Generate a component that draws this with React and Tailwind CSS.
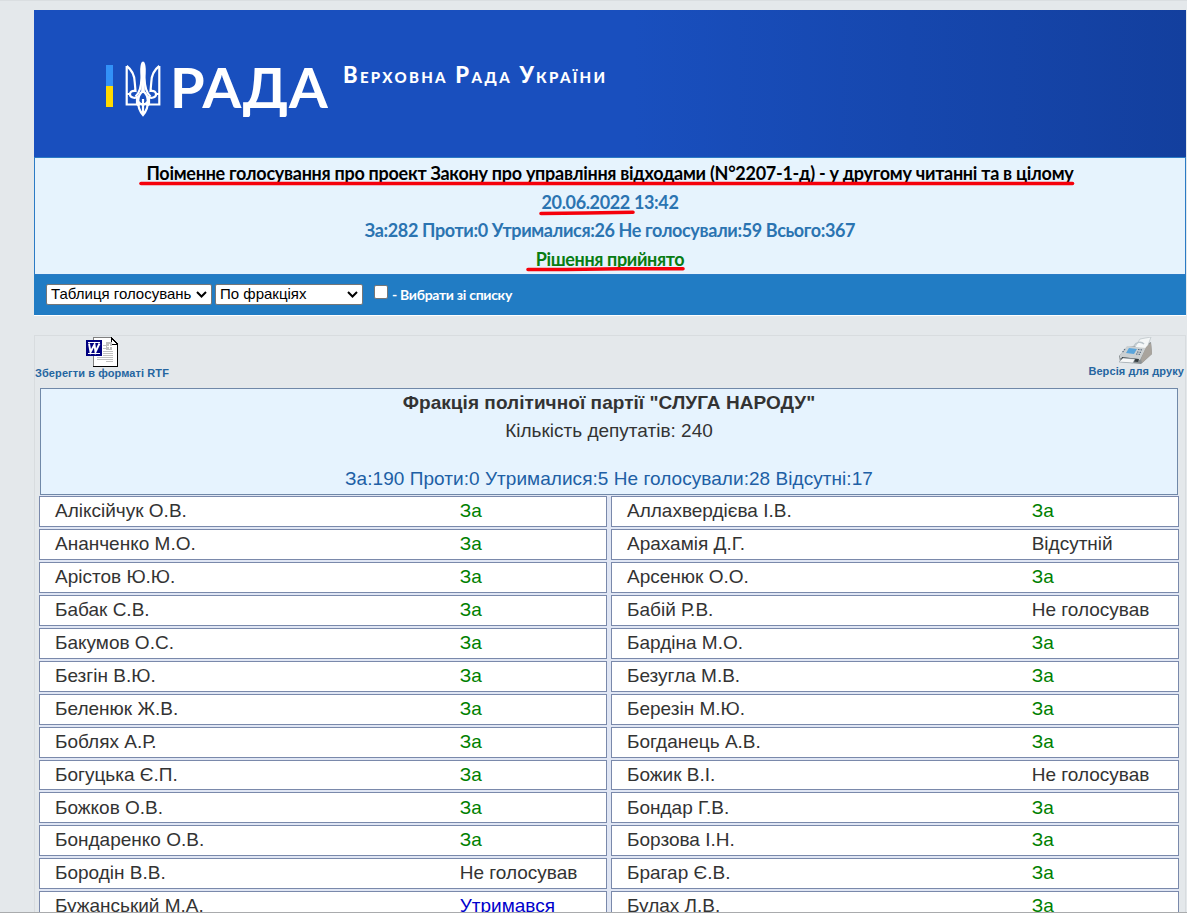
import React from 'react';

const votes = [
    ['Аліксійчук О.В.', 'За', 'Аллахвердієва І.В.', 'За'],
    ['Ананченко М.О.', 'За', 'Арахамія Д.Г.', 'Відсутній'],
    ['Арістов Ю.Ю.', 'За', 'Арсенюк О.О.', 'За'],
    ['Бабак С.В.', 'За', 'Бабій Р.В.', 'Не голосував'],
    ['Бакумов О.С.', 'За', 'Бардіна М.О.', 'За'],
    ['Безгін В.Ю.', 'За', 'Безугла М.В.', 'За'],
    ['Беленюк Ж.В.', 'За', 'Березін М.Ю.', 'За'],
    ['Боблях А.Р.', 'За', 'Богданець А.В.', 'За'],
    ['Богуцька Є.П.', 'За', 'Божик В.І.', 'Не голосував'],
    ['Божков О.В.', 'За', 'Бондар Г.В.', 'За'],
    ['Бондаренко О.В.', 'За', 'Борзова І.Н.', 'За'],
    ['Бородін В.В.', 'Не голосував', 'Брагар Є.В.', 'За'],
    ['Бужанський М.А.', 'Утримався', 'Булах Л.В.', 'За'],
];

const statusColors = {
    'За': 'text-[#008000]',
    'Утримався': 'text-[#0000cc]',
};

const Trident = () => (
    <svg className="ml-[12px] h-[56px] w-[36px]" viewBox="0 0 36 56" fill="none" stroke="#fff" strokeWidth="2.2">
        <path d="M1.700 5v38.500h12.600M34.300 5v38.500H21.700" />
        <path d="M1.700 5C7 9 9.500 15 9.700 21L10.500 30c-4-.5-5.500 1-5.500 3.500 0 3 5 4.500 8 2M34.300 5C29 9 26.500 15 26.300 21L25.500 30c4-.5 5.500 1 5.500 3.500 0 3-5 4.500-8 2" />
        <path d="M2 33h4M34 33h-4M12 35.500v8M24 35.500v8" />
        <path d="M18 1c-3 5-1.300 10-1.500 16-.2 8-2 15-6 18.500M18 1c3 5 1.300 10 1.500 16 .2 8 2 15 6 18.500" />
        <path d="M18 3v27" strokeWidth="3.600" />
        <path d="M18 30c-6 4-7 16 0 24 7-8 6-20 0-24zM12.500 38c1 4 3 5.500 5.500 6 2.500-.5 4.500-2 5.500-6M12.500 45c2-3 9-3 11 0M18 38v16" />
    </svg>
);

const WordIcon = () => (
    <svg className="ml-[51px] block h-[30px] w-[33px]" viewBox="0 0 33 30" shapeRendering="crispEdges">
        <path d="M7 0h18l7 7v23H7z" fill="#fff" />
        <path d="M7.500 30V.5h18" fill="none" stroke="#808080" />
        <path d="M25 .5v7h6.500V29.500H7M25 .5l7 7" fill="none" stroke="#000" />
        <path d="M17 8.500h3M17 11.500h3M11 20.500h16M11 22.500h16M17 14.500h10M17 16.500h10M17 18.500h10M20 24.500h7" stroke="#c0c0c0" />
        <path d="M20 5h6v8h-6z" fill="#c0c0c0" />
        <path d="M21 9.500h5M23.500 7v5" stroke="#fff" />
        <path d="M0 3h16v16H0z" fill="#000080" />
        <path d="M2 5.500h12M2 16.500h12" fill="none" stroke="#fff" />
        <path d="M3 6.500l1.500 8.500 4-7.500 1 7.500 4-8.500" fill="none" stroke="#fff" strokeWidth="1.900" shapeRendering="auto" />
    </svg>
);

const PrinterIcon = () => (
    <svg className="mr-[32px] block h-[29px] w-[35px]" viewBox="0 0 35 29">
        <path d="M1 19l8-9 17-2 7-3 1 12-11 10-21-2z" fill="#8a9093" />
        <path d="M17 10l5-8 11-2-4 11-8 3z" fill="#f4f7f8" stroke="#bac1c5" strokeWidth=".7" />
        <path d="M2 18l7-9 19 2-6 12-20-2z" fill="#cbd0d2" />
        <path d="M28 10l5-4 1 11-10 9-1-4z" fill="#a9a49d" />
        <path d="M11 11l8 1-3 5-8-1z" fill="#59a5dc" />
        <path d="M20 12.500l5 .5M19 15l5 .5M18 17l5 .5M7 12l-3 4" stroke="#596d82" strokeWidth="1.200" strokeDasharray="1.500 1" />
        <path d="M4 20l17 2-1 3-17-2z" fill="#343c3f" />
        <path d="M5 21l12 1-2 4-14-1z" fill="#f7f8f8" stroke="#8b979f" strokeWidth=".5" />
        <path d="M16 9c2-4 7-5 10-2" fill="none" stroke="#b9c4ca" strokeWidth="1.500" />
    </svg>
);

const Select = ({ label, className }) => (
    <div className={`flex h-[21px] items-center justify-between rounded-[2px] border border-[#767676] bg-white pl-[4px] pr-[4px] text-[15px] text-black ${className}`}>
        <span className="whitespace-nowrap">{label}</span>
        <svg className="h-[7px] w-[11px]" viewBox="0 0 11 7" fill="none" stroke="#000" strokeWidth="2">
            <path d="M1 1l4.500 4.500L10 1" />
        </svg>
    </div>
);

const VoteCell = ({ name, status }) => (
    <div className="flex h-[30.940px] w-[568px] items-center border border-[#7a89ab] bg-white pb-[0.300px] pl-[15px] text-[19px] text-[#333]">
        <span className="w-[404.700px] shrink-0">{name}</span>
        <span className={statusColors[status] || 'text-[#333]'}>{status}</span>
    </div>
);

const App = () => {
    return (
        <div className="h-[913px] w-[1187px] overflow-hidden border-b border-b-[#a9abad] border-t border-t-[#dadee1] bg-[#e4e8eb] pl-[34px] pt-[9px] font-['Liberation_Sans',Arial,sans-serif]">
            <div className="w-[1152px]">
                <header className="flex h-[147px] items-start bg-[linear-gradient(90deg,#194fbe_0%,#194fbe_52%,#133f9e_100%)] pl-[72px] text-white font-[Lato,sans-serif]">
                    <div className="mt-[55px] h-[42px] w-[7px] bg-[linear-gradient(#3291f8_50%,#ffda00_50%)]" />
                    <div className="mt-[51px]">
                        <Trident />
                    </div>
                    <div className="ml-[9px] mt-[45px] w-[159px] whitespace-nowrap text-[56px] font-bold leading-[64px] tracking-[0.600px]">РАДА</div>
                    <div className="ml-[14px] mt-[50px] whitespace-nowrap text-[22px] font-black leading-[30px] tracking-[2.300px] [font-variant:small-caps]">Верховна Рада України</div>
                </header>

                <section className="relative h-[118px] border border-[#2b7bc5] bg-[#e6f3fd] pt-px text-center text-[18px] font-bold leading-[28.700px] tracking-[-0.370px] text-[#2b74b1] font-[Lato,sans-serif]">
                    <div className="whitespace-nowrap tracking-[-0.280px] text-black">Поіменне голосування про проект Закону про управління відходами (N°2207-1-д) - у другому читанні та в цілому</div>
                    <div>20.06.2022 13:42</div>
                    <div>За:282 Проти:0 Утрималися:26 Не голосували:59 Всього:367</div>
                    <div className="text-[#087c12]">Рішення прийнято</div>
                    {/* red marker lines over the text */}
                    <svg className="absolute -left-px -top-px h-[117px] w-[1152px]" viewBox="0 0 1152 117" fill="none" stroke="#f5000b" strokeWidth="3.600" strokeLinecap="round">
                        <path d="M107 26.500H1038.500" />
                        <path d="M507 56.500l45-.500 47-.8" />
                        <path d="M494 112.500h38l54-.8h63" />
                    </svg>
                </section>

                <div className="flex h-[40px] items-center bg-[#217cc4] pb-px pl-[12px]">
                    <Select label="Таблиця голосувань" className="w-[166px]" />
                    <Select label="По фракціях" className="ml-[3px] w-[148px]" />
                    <div className="mb-[5px] ml-[11px] h-[14px] w-[14px] rounded-[2px] border border-[#767676] bg-white" />
                    <span className="ml-[4px] whitespace-nowrap text-[14px] font-bold tracking-[-0.300px] text-white font-[Lato,sans-serif]">- Вибрати зі списку</span>
                </div>
                <div className="h-px bg-white" />

                <main className="mt-[19px] border border-[#d8dcdf]">
                    <div className="flex h-[52px] justify-between pt-px text-[11px] font-bold leading-[13px] tracking-[0.090px] text-[#2565a0]">
                        <div>
                            <WordIcon />
                            <div className="whitespace-nowrap">Зберегти в форматі RTF</div>
                        </div>
                        <div className="flex flex-col items-end">
                            <PrinterIcon />
                            <div className="-mt-px mr-px whitespace-nowrap">Версія для друку</div>
                        </div>
                    </div>
                    <div className="ml-[5px] h-[107px] w-[1138px] border border-[#7088a8] bg-[#e6f3fe] pt-px text-center text-[19px] leading-[28px] text-[#333]">
                        <div className="font-bold leading-[26px] tracking-[0.050px]">Фракція політичної партії "СЛУГА НАРОДУ"</div>
                        <div className="pt-px">Кількість депутатів: 240</div>
                        <div className="mt-[20px] tracking-[0.050px] text-[#205fa5]">За:190 Проти:0 Утрималися:5 Не голосували:28 Відсутні:17</div>
                    </div>
                    <div className="ml-[4px] flex w-[1140px] flex-col gap-[2px] bg-[#e0e6f4] pt-px">
                        {votes.map((row) => (
                            <div key={row[0]} className="flex justify-between">
                                <VoteCell name={row[0]} status={row[1]} />
                                <VoteCell name={row[2]} status={row[3]} />
                            </div>
                        ))}
                    </div>
                </main>
            </div>
        </div>
    );
};

export default App;
